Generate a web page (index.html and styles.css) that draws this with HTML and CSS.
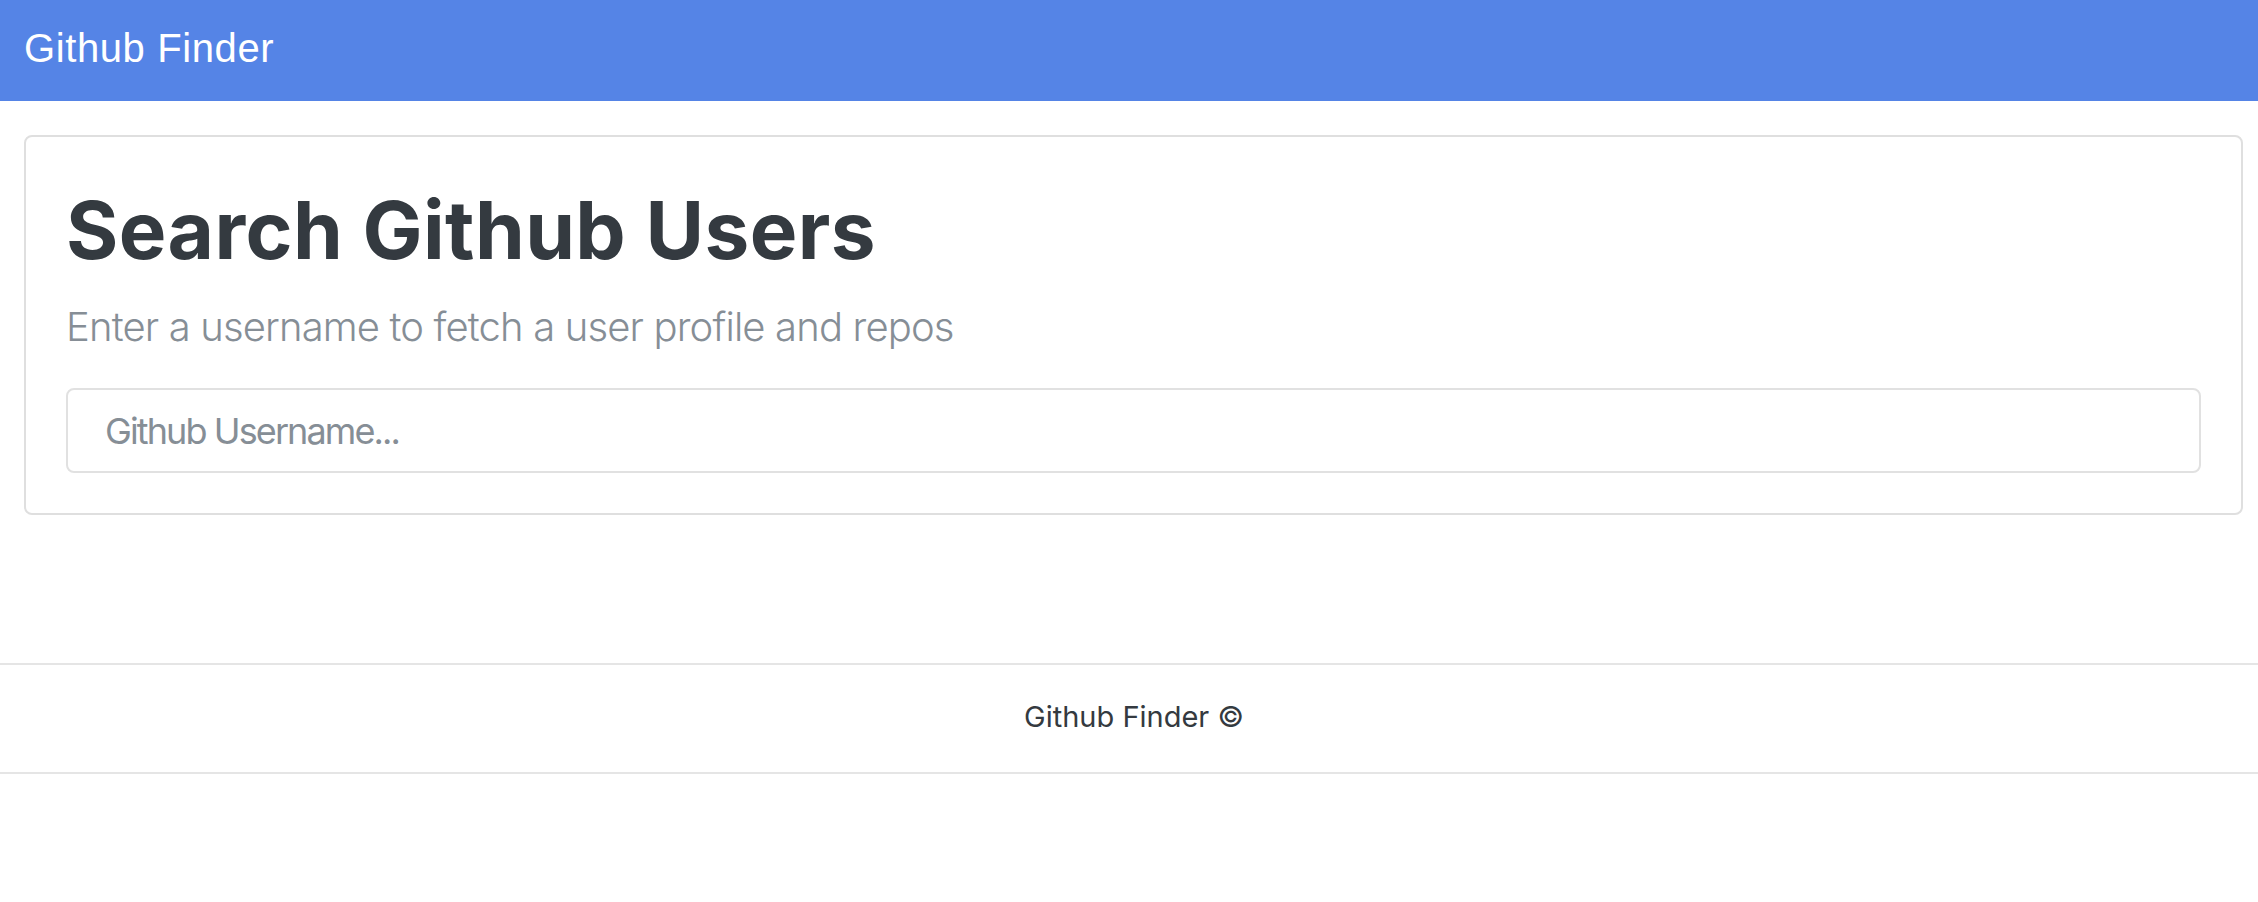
FILE: index.html
```html
<!DOCTYPE html>
<html lang="en">
<head>
<meta charset="utf-8">
<title>Github Finder</title>
<link rel="stylesheet" href="styles.css">
</head>
<body>
<nav class="navbar">
  <span class="brand">Github Finder</span>
</nav>
<main class="card">
  <h1 class="title">Search Github Users</h1>
  <p class="lead">Enter a username to fetch a user profile and repos</p>
  <input class="search" type="text" placeholder="Github Username...">
</main>
<footer class="footer">Github Finder &copy;</footer>
</body>
</html>
```
FILE: styles.css
```css
html, body {
  margin: 0;
  padding: 0;
  background: #ffffff;
}
body {
  font-family: Inter, "Noto Sans", sans-serif;
  color: #343a40;
}
.navbar {
  box-sizing: border-box;
  height: 101px;
  background: #5584e6;
  padding: 24px 0 0 24px;
}
.brand {
  font-family: "Liberation Sans", Arial, sans-serif;
  font-size: 40px;
  line-height: 48px;
  letter-spacing: 0.6px;
  color: #ffffff;
}
.card {
  display: block;
  margin: 34px 15px 0 24px;
  border: 2px solid #dfdfdf;
  border-radius: 8px;
  padding: 40px;
}
.title {
  margin: 5px 0 19px;
  font-size: 80px;
  line-height: 96px;
  font-weight: 700;
  letter-spacing: 0.4px;
  color: #343a40;
}
.lead {
  margin: 0 0 31px;
  font-size: 40px;
  line-height: 60px;
  font-weight: 300;
  letter-spacing: -0.85px;
  color: #868e96;
}
.search {
  display: block;
  box-sizing: border-box;
  width: 100%;
  height: 85px;
  margin: 0;
  padding: 0 37px;
  border: 2px solid #e1e1e1;
  border-radius: 8px;
  font-family: Inter, "Noto Sans", sans-serif;
  font-size: 36px;
  letter-spacing: -1.9px;
  color: #495057;
  outline: none;
}
.search::placeholder {
  color: #868e96;
}
.footer {
  margin-top: 148px;
  border-top: 2px solid #e5e5e5;
  border-bottom: 2px solid #e5e5e5;
  padding: 32px 0 35px 10px;
  text-align: center;
  font-size: 29px;
  line-height: 40px;
  color: #343a40;
}
```
